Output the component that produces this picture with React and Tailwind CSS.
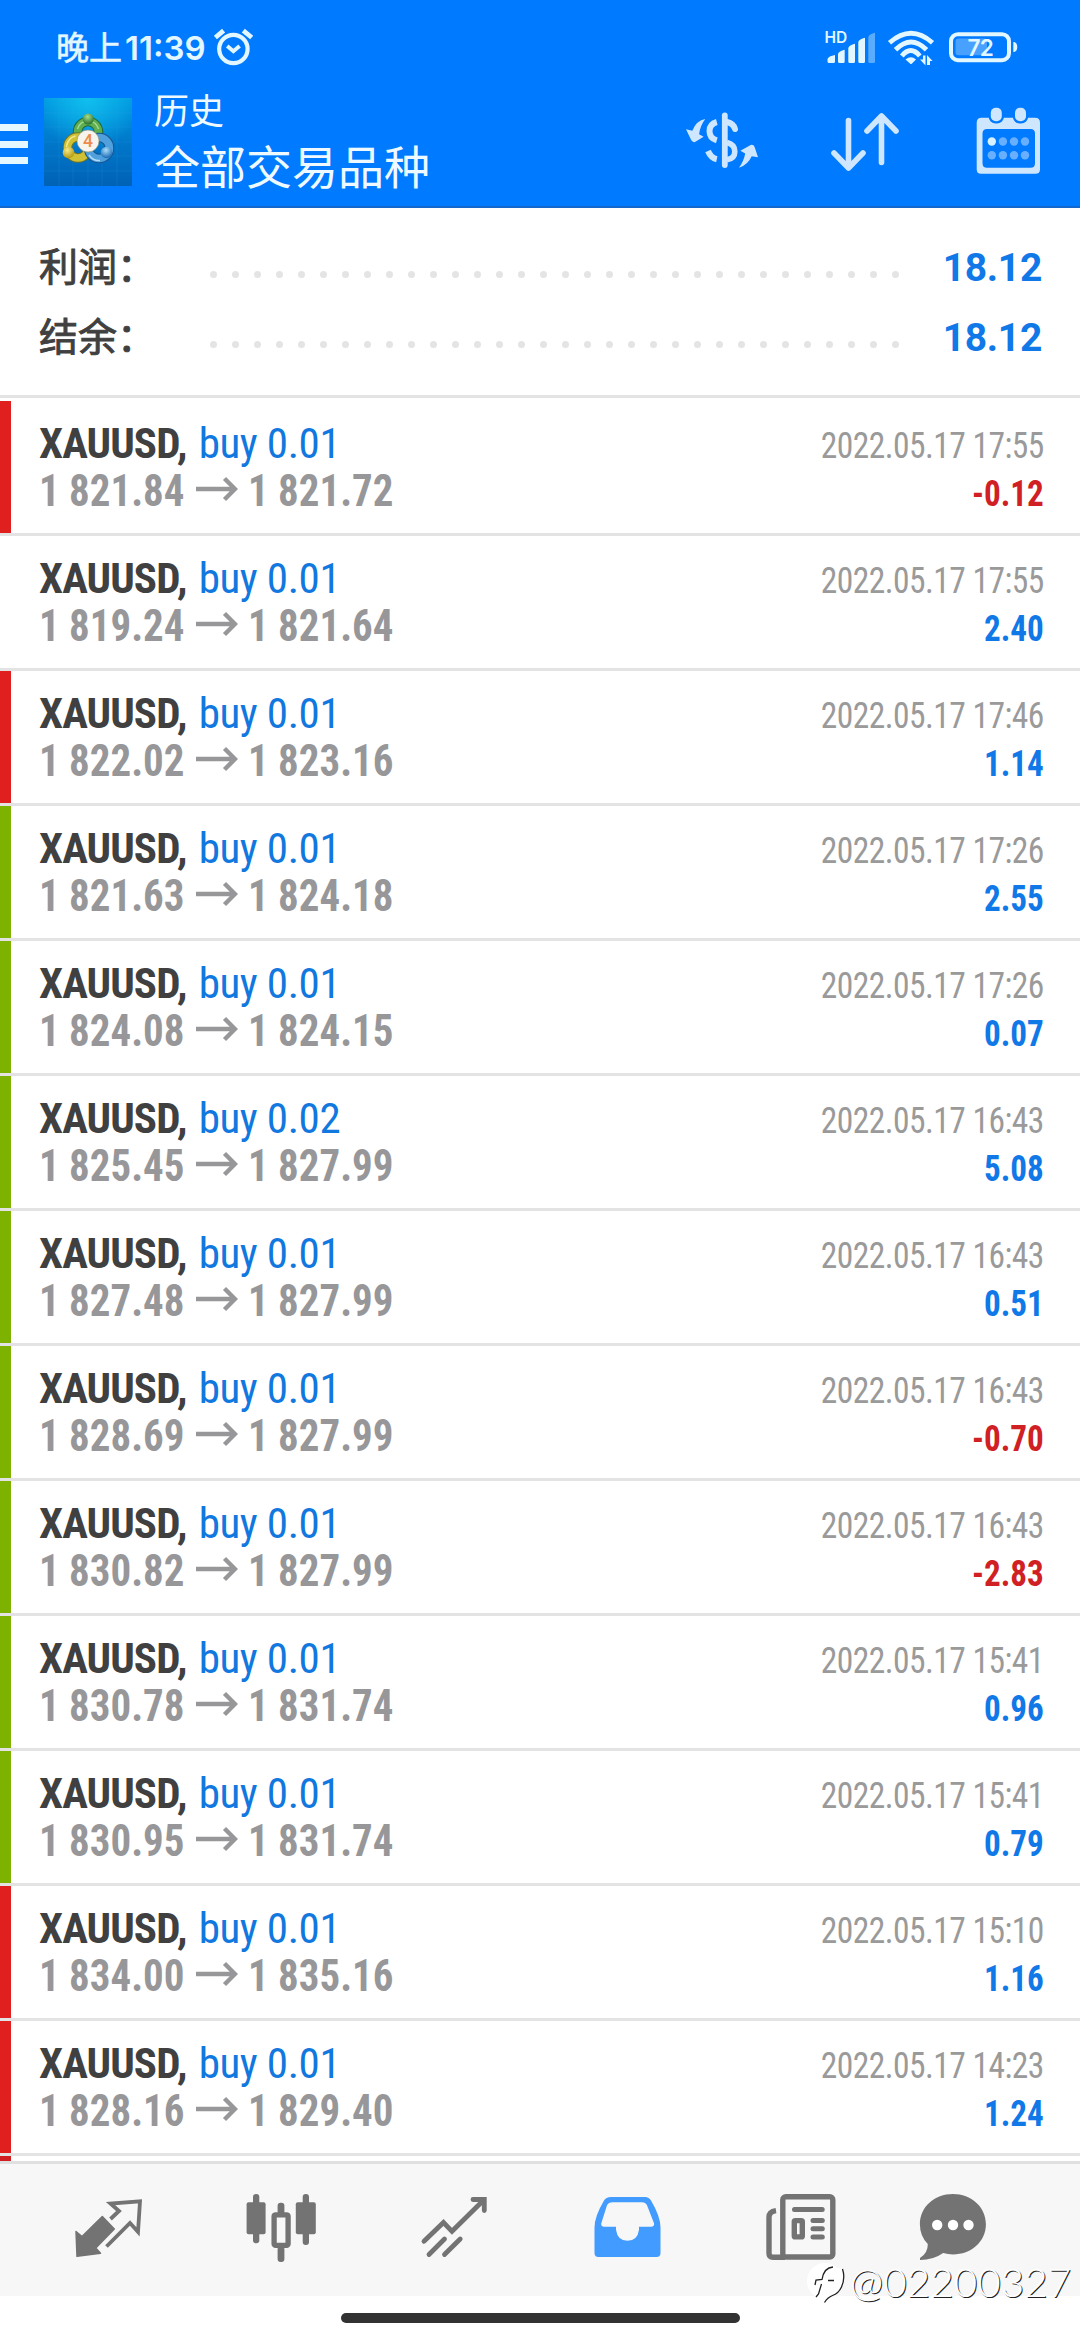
const BAR_COLORS = {
    red: 'bg-[#e01f1f]',
    green: 'bg-[#7db300]',
    none: 'bg-white',
};

const deals = [
    { bar: 'red', lot: '0.01', open: '1 821.84', close: '1 821.72', time: '2022.05.17 17:55', profit: '-0.12' },
    { bar: 'none', lot: '0.01', open: '1 819.24', close: '1 821.64', time: '2022.05.17 17:55', profit: '2.40' },
    { bar: 'red', lot: '0.01', open: '1 822.02', close: '1 823.16', time: '2022.05.17 17:46', profit: '1.14' },
    { bar: 'green', lot: '0.01', open: '1 821.63', close: '1 824.18', time: '2022.05.17 17:26', profit: '2.55' },
    { bar: 'green', lot: '0.01', open: '1 824.08', close: '1 824.15', time: '2022.05.17 17:26', profit: '0.07' },
    { bar: 'green', lot: '0.02', open: '1 825.45', close: '1 827.99', time: '2022.05.17 16:43', profit: '5.08' },
    { bar: 'green', lot: '0.01', open: '1 827.48', close: '1 827.99', time: '2022.05.17 16:43', profit: '0.51' },
    { bar: 'green', lot: '0.01', open: '1 828.69', close: '1 827.99', time: '2022.05.17 16:43', profit: '-0.70' },
    { bar: 'green', lot: '0.01', open: '1 830.82', close: '1 827.99', time: '2022.05.17 16:43', profit: '-2.83' },
    { bar: 'green', lot: '0.01', open: '1 830.78', close: '1 831.74', time: '2022.05.17 15:41', profit: '0.96' },
    { bar: 'green', lot: '0.01', open: '1 830.95', close: '1 831.74', time: '2022.05.17 15:41', profit: '0.79' },
    { bar: 'red', lot: '0.01', open: '1 834.00', close: '1 835.16', time: '2022.05.17 15:10', profit: '1.16' },
    { bar: 'red', lot: '0.01', open: '1 828.16', close: '1 829.40', time: '2022.05.17 14:23', profit: '1.24' },
];

const StatusBar = () => (
    <div className="flex h-[84px] items-start pl-14 text-[#e2f7ff]">
        <span className="mt-[14px] font-['Noto_Sans_CJK_SC',sans-serif] text-[33px] leading-[64px] [-webkit-text-stroke:0.6px_currentColor]">晚上</span>
        <span className="mt-4 ml-[3px] font-['Inter',sans-serif] text-[33px] font-semibold leading-[64px]">11:39</span>
        <svg className="ml-[6px] h-[84px] w-[42px]" viewBox="211 0 42 84" fill="none" stroke="currentColor" strokeWidth="4.2">
            <circle cx="232.4" cy="49" r="14.2" />
            <path d="M226.2 46l6.2 5.3 6.2-5.3" strokeWidth="3.8" />
            <path d="M214.4 37.5l8.2-6.8M242.3 30.7l8.4 6.8" strokeWidth="4.8" />
        </svg>
        <svg className="ml-auto h-[84px] w-[196px]" viewBox="824 0 196 84" fill="currentColor">
            {/* cellular */}
            <text x="824.5" y="43" fontSize="15.5" fontWeight="600" fontFamily="Inter, sans-serif">HD</text>
            <path d="M827.5 59q1-3 7.5-4v6.5q0 1.5-1.5 1.5h-4.5q-1.5 0-1.5-1.5zM838 54q1-3 6.7-4.2v11.7q0 1.5-1.5 1.5h-3.7q-1.5 0-1.5-1.5zM848.3 48q1-3 6.7-4.2v17.7q0 1.5-1.5 1.5h-3.7q-1.5 0-1.5-1.5zM858.3 42q1-3 6.7-4.2v23.7q0 1.5-1.5 1.5h-3.7q-1.5 0-1.5-1.5z" />
            <path opacity=".4" d="M868.3 37q1-3 6.7-4.2v28.7q0 1.5-1.5 1.5h-3.7q-1.5 0-1.5-1.5z" />
            {/* wifi */}
            <g fill="none" stroke="currentColor" strokeWidth="4.8">
                <path d="M889.500 42.800q21.500-19 43 0" />
                <path d="M895.500 49.800q15.500-15.500 31 0" />
                <path d="M901.800 56q9-11 18 0" />
            </g>
            <path d="M905.500 59.500q5.500-4.500 10.500 0l-4 4q-1 1-2 0z" />
            <path d="M920 59.500h3v-4h2.500v10zM927 55l5.600 6h-2.600v4h-3z" />
            {/* battery */}
            <rect x="955.500" y="38.500" width="31.500" height="16.700" rx="3" opacity=".32" />
            <rect x="951" y="34.200" width="58" height="26" rx="7" fill="none" stroke="currentColor" strokeWidth="4" />
            <path d="M1013.300 42h1q3 1 3 5t-3 5h-1z" />
            <text x="967.500" y="56" fontSize="22.500" fontWeight="600" letterSpacing="-.8" fontFamily="Inter, sans-serif">72</text>
        </svg>
        <div className="w-[60px]" />
    </div>
);

const AppLogo = () => (
    <svg className="mt-[14px] ml-4 h-[88px] w-[88px]" viewBox="0 0 88 88">
        <defs>
            <linearGradient id="sky" x1="0" y1="0" x2="0" y2="1">
                <stop offset="0" stopColor="#0098e0" />
                <stop offset=".5" stopColor="#0078cb" />
                <stop offset="1" stopColor="#0062b5" />
            </linearGradient>
            <radialGradient id="glow" cx=".5" cy="0" r=".6">
                <stop offset="0" stopColor="#12c4f0" stopOpacity=".9" />
                <stop offset="1" stopColor="#12c4f0" stopOpacity="0" />
            </radialGradient>
            <radialGradient id="greenBall" cx=".45" cy=".3" r=".7">
                <stop offset="0" stopColor="#a9dc8c" />
                <stop offset="1" stopColor="#22702a" />
            </radialGradient>
            <radialGradient id="goldBall" cx=".4" cy=".3" r=".7">
                <stop offset="0" stopColor="#f6e884" />
                <stop offset="1" stopColor="#b39a12" />
            </radialGradient>
            <radialGradient id="blueBall" cx=".45" cy=".3" r=".7">
                <stop offset="0" stopColor="#a9dcfa" />
                <stop offset="1" stopColor="#1668b4" />
            </radialGradient>
        </defs>
        <rect width="88" height="88" fill="url(#sky)" />
        <rect width="88" height="88" fill="url(#glow)" />
        <path d="M0 15h88M0 29h88M0 44h88M0 58h88M0 73h88M15 0v88M29 0v88M44 0v88M58 0v88M73 0v88" stroke="#3fb0f0" strokeWidth=".6" opacity=".22" />
        <g fill="none">
            <circle cx="44" cy="34" r="10.500" stroke="#1f6a3a" strokeWidth="9.500" />
            <circle cx="44" cy="34" r="10.500" stroke="#5fae50" strokeWidth="7.500" />
            <path d="M33.500 31q2.500-8 10.500-8t10.500 8" stroke="#a5d890" strokeWidth="1.500" />
            <circle cx="34" cy="49.500" r="10.500" stroke="#6f7424" strokeWidth="9.500" />
            <circle cx="34" cy="49.500" r="10.500" stroke="#cfc034" strokeWidth="7.500" />
            <path d="M22.500 49q1-9 9-11" stroke="#f0e88c" strokeWidth="1.500" />
            <circle cx="55" cy="50" r="10.500" stroke="#17548f" strokeWidth="9.500" />
            <circle cx="55" cy="50" r="10.500" stroke="#4fa0dc" strokeWidth="7.500" />
            <path d="M45 57q4 6 11 5.500" stroke="#b3dcf6" strokeWidth="1.500" />
        </g>
        <circle cx="44.200" cy="21" r="5.600" fill="url(#greenBall)" />
        <circle cx="24.500" cy="54.500" r="5.800" fill="url(#goldBall)" />
        <circle cx="62.500" cy="54.500" r="5.800" fill="url(#blueBall)" />
        <circle cx="44" cy="43" r="11" fill="#f7f4ee" stroke="#8c8a70" strokeWidth=".6" />
        <text x="44" y="49.200" textAnchor="middle" fontSize="17.500" fontWeight="500" fontFamily="Roboto, sans-serif" fill="#ee8a4c">4</text>
    </svg>
);

const Toolbar = () => (
    <div className="flex h-[124px] items-start text-[#cfe6ff]">
        <div className="mt-10 flex w-7 flex-col gap-[9.5px]">
            <div className="h-[7px] bg-[#e6f8ff]" />
            <div className="h-[7px] bg-[#e6f8ff]" />
            <div className="h-[7px] bg-[#e6f8ff]" />
        </div>
        <AppLogo />
        <div className="ml-[22px] font-['Noto_Sans_CJK_SC',sans-serif] text-[#eefaff]">
            <p className="text-[35px] leading-[50px]">历史</p>
            <p className="text-[46px] leading-[60px]">全部交易品种</p>
        </div>
        <svg className="ml-auto h-[124px] w-[80px]" viewBox="682 84 80 124" fill="none" stroke="currentColor">
            <path d="M724.800 115.300v49.800" strokeWidth="5.800" strokeLinecap="round" />
            <path d="M716.800 122q-7.300 2-7.300 9.200 0 7 7.300 9.200M708 151q3 7 8.800 8.300" strokeWidth="6" />
            <path d="M727 122q6.500 1.500 8 7" strokeWidth="6" strokeLinecap="round" />
            <path d="M727 142.500q7.800 2 7.800 9t-7.800 8.300" strokeWidth="5.600" />
            <g fill="currentColor" stroke="none">
                <path d="M705.300 119q-9 1.500-13 11.700l-6.300-1.400 4.800 10q1.200 3.500 4.200 2.700l8.600-5.300-4.500-2.500q1.200-9 6.200-15.200z" />
                <path d="M739 167.700q9-3 12.700-11.500l6.300 1.100-3.300-10q-1-3-4-2.300l-10.300 5.700 4.800 2.700q-1.200 7-6.200 14.300z" />
            </g>
        </svg>
        <svg className="ml-[66px] h-[124px] w-[76px]" viewBox="828 84 76 124" fill="none" stroke="currentColor" strokeWidth="5.600" strokeLinecap="round" strokeLinejoin="round">
            <path d="M848.500 120.500v47.500M834 153l14.500 15 14.500-15" />
            <path d="M881.500 162.500v-46.500M867 131l14.500-15 14.500 15" />
        </svg>
        <svg className="mr-9 ml-[70px] h-[124px] w-[70px]" viewBox="974 84 70 124" fill="currentColor">
            <path fillRule="evenodd" d="M981.500 117.700h53.500q5 0 5 5v46.500q0 4.500-4.500 4.500h-54.500q-4.300 0-4.300-4.500v-46.500q0-5 4.800-5zM987 129q-4.500 0-4.500 4.500v29.700q0 4.500 4.500 4.500h43.500q4.500 0 4.500-4.500v-29.700q0-4.500-4.500-4.500z" />
            <rect x="990.800" y="107.700" width="11" height="13.600" rx="5" stroke="#007aff" strokeWidth="4.500" paintOrder="stroke" />
            <rect x="1015" y="107.700" width="11" height="13.600" rx="5" stroke="#007aff" strokeWidth="4.500" paintOrder="stroke" />
            <circle cx="991.800" cy="141.500" r="4.200" fill="#d8f3ff" />
            <g opacity=".5">
                <circle cx="1002.900" cy="141.500" r="4.200" />
                <circle cx="1014" cy="141.500" r="4.200" />
                <circle cx="1025" cy="141.500" r="4.200" />
                <circle cx="991.800" cy="155.300" r="4.200" />
                <circle cx="1002.900" cy="155.300" r="4.200" />
                <circle cx="1014" cy="155.300" r="4.200" />
                <circle cx="1025" cy="155.300" r="4.200" />
            </g>
        </svg>
    </div>
);

const SummaryRow = ({ label, value }) => (
    <div className="flex h-[70px] items-baseline pr-[38px] pl-[39px]">
        <span className="w-[171px] font-['Noto_Sans_CJK_SC',sans-serif] text-[39px] leading-[70px] text-[#404040] [-webkit-text-stroke:0.9px_currentColor]">{label}</span>
        <span className="mt-[42px] flex w-[689px] justify-between self-start">
            {Array.from({ length: 32 }, (_, i) => (
                <span key={i} className="h-[7px] w-[7px] rounded-full bg-[#e4e4e4]" />
            ))}
        </span>
        <span className="ml-auto text-[39px] font-bold leading-[70px] tracking-[-0.3px] text-[#1178e8]">{value}</span>
    </div>
);

const DealRow = ({ deal }) => (
    <div className="flex h-[135px] border-b-[3px] border-[#e3e3e4]">
        <div className={`w-[11px] ${BAR_COLORS[deal.bar]}`} />
        <div className="pt-[17.5px] pl-7 font-['Roboto_Condensed',sans-serif] leading-[48px]">
            <div className="flex gap-3 text-[43px]">
                <span className="font-bold tracking-[-0.9px] text-[#404040]">XAUUSD,</span>
                <span className="tracking-[-0.4px] text-[#1178e0]">buy {deal.lot}</span>
            </div>
            <div className="flex text-[44px] font-bold text-[#97979a]">
                <span className="w-[157px] origin-left scale-x-93 whitespace-nowrap">{deal.open}</span>
                <svg className="h-12 w-[42px]" viewBox="0 0 42 48" fill="none" stroke="currentColor" strokeWidth="4.400">
                    <path d="M0 22h38M28.500 11.500l10.500 10.500-10.500 10.500" />
                </svg>
                <span className="ml-[10px] w-[157px] origin-left scale-x-93 whitespace-nowrap">{deal.close}</span>
            </div>
        </div>
        <div className="mr-[36.5px] ml-auto pt-[21px] text-right font-['Roboto_Condensed',sans-serif] text-[36px] leading-[48px]">
            <p className="origin-right scale-x-93 tracking-[-0.57px] text-[#9a9a9a]">{deal.time}</p>
            <p className={`origin-right scale-x-92 font-bold ${deal.profit.startsWith('-') ? 'text-[#d02024]' : 'text-[#1178e8]'}`}>{deal.profit}</p>
        </div>
    </div>
);

const TabBar = () => (
    <nav className="flex h-[135px] border-t-[3px] border-[#e0e0e1] bg-[#f7f7f7] pl-[21px] text-[#737373]">
        {/* quotes */}
        <svg className="h-[132px] w-[173px]" viewBox="21 44 173 132">
            <path fill="currentColor" stroke="currentColor" strokeWidth="1.500" strokeLinejoin="round" d="M76 111.500l6 5 20.300-20 12 12.500-18.500 19 4.700 5.300-23.500 3z" />
            <path fill="none" stroke="currentColor" strokeWidth="3.800" d="M110.500 99l8.500-8-8.500-7.500 29.500-2.200-2 30.500-8-8.800-23.500 23.500" />
        </svg>
        {/* chart */}
        <svg className="h-[132px] w-[173px]" viewBox="194 44 173 132" fill="currentColor">
            <rect x="246.600" y="82.300" width="19" height="32" rx="2" />
            <rect x="253" y="74" width="6.300" height="49.300" rx="3" />
            <rect x="295.800" y="82.300" width="20" height="32" rx="2" />
            <rect x="302.700" y="74" width="6.300" height="51" rx="3" />
            <rect x="277.600" y="82.700" width="6.800" height="12" rx="3" />
            <rect x="277.600" y="126" width="6.800" height="16" rx="3" />
            <rect x="274.100" y="94.800" width="14" height="30.600" rx="1.500" fill="none" stroke="currentColor" strokeWidth="5.300" />
        </svg>
        {/* trade */}
        <svg className="h-[132px] w-[173px]" viewBox="367 44 173 132" fill="none" stroke="currentColor" strokeWidth="4.800" strokeLinecap="round">
            <path d="M424 121.300l19.500-18.800 8.500 8.800 31.500-31M473 79.500h11.300v11" />
            <path d="M429 134.500l15.500-15.500M444.500 134.500l15.700-15.500" />
        </svg>
        {/* history */}
        <svg className="h-[132px] w-[173px] text-[#429bff]" viewBox="540 44 173 132" fill="currentColor">
            <path fillRule="evenodd" d="M611 77h34q4 0 6 3.500 9.500 16 9.500 27v25.500q0 4-4 4h-58q-4 0-4-4v-25.500q0-11 9.500-27 2-3.500 7-3.500zM612.500 82.300q-4 0-5.500 3l-5.700 18q-.7 3.400 3 3.400h11.700v3q1.500 11 11.500 11t11.500-11v-3h12q3.700 0 3-3.400l-7-18q-1.500-3-5-3z" />
        </svg>
        {/* news */}
        <svg className="h-[132px] w-[173px]" viewBox="713 44 173 132" fill="none" stroke="currentColor" strokeWidth="5.400">
            <rect x="782.800" y="76.700" width="50" height="60.300" rx="3" />
            <path d="M785 137.200h-12q-4 0-4-4v-36q0-5.500 7-6.500" />
            <path d="M794.500 89.500h27.700M813 100.400h9.300M813 108.700h9.300M813 116.900h9.300" strokeWidth="5" strokeLinecap="round" />
            <rect x="794.300" y="100.600" width="8" height="16.300" rx="1" />
        </svg>
        {/* messages */}
        <svg className="h-[132px] w-[132px]" viewBox="886 44 132 132">
            <path fill="currentColor" d="M952.900 74c18.500 0 33 13 33 30.200s-14.500 30.200-33 30.200q-5-.2-9.700-1.400-10 7-23.200 7v-2q8-5 7.800-14-7.900-8-7.900-19.800c0-17.200 14.500-30.200 33-30.200z" />
            <circle cx="937.200" cy="105" r="5.200" fill="#fff" />
            <circle cx="953" cy="105" r="5.200" fill="#fff" />
            <circle cx="968.500" cy="105" r="5.200" fill="#fff" />
        </svg>
    </nav>
);

const Watermark = () => (
    <div className="absolute top-[2255px] left-[806px] flex items-start text-white">
        <svg className="h-[58px] w-[44px]" viewBox="0 0 44 58" fill="none">
            <circle cx="19" cy="26" r="18" fill="#fff" />
            <path d="M20 14q9-3 16 0 3 9-1 18-5 10-14 10z" fill="#fff" />
            <path d="M9 30l1-5 6-.5q2-12 11-12.500M22 25.500h6M10 42l2.500-3 3-10M36.500 14q3 9-1 18-3 6.500-9 8.500-5 2-8 7" stroke="#222" strokeWidth="1.300" />
        </svg>
        <span className="font-['Lato',sans-serif] text-[40px] font-light leading-[54px] tracking-[0.3px] text-shadow-[1px_1px_0_#222]">@02200327</span>
    </div>
);

export default function App() {
    return (
        <div className="relative h-[2340px] w-[1080px] overflow-hidden bg-white font-['Roboto',sans-serif]">
            <header className="h-[208px] border-b-2 border-[#1268cc] bg-[#007aff]">
                <StatusBar />
                <Toolbar />
            </header>

            <section className="h-[190px] border-b-[3px] border-[#e3e3e4] pt-[21px]">
                <SummaryRow label="利润：" value="18.12" />
                <SummaryRow label="结余：" value="18.12" />
            </section>

            <main className="h-[1763px] overflow-hidden pt-[3px]">
                {deals.map((deal, i) => (
                    <DealRow key={i} deal={deal} />
                ))}
                <div className="h-[5px] w-[11px] bg-[#d01f22]" />
            </main>

            <TabBar />

            <div className="flex justify-center pt-[17px]">
                <div className="h-[10px] w-[399px] rounded-full bg-[#323232]" />
            </div>

            <Watermark />
        </div>
    );
}
